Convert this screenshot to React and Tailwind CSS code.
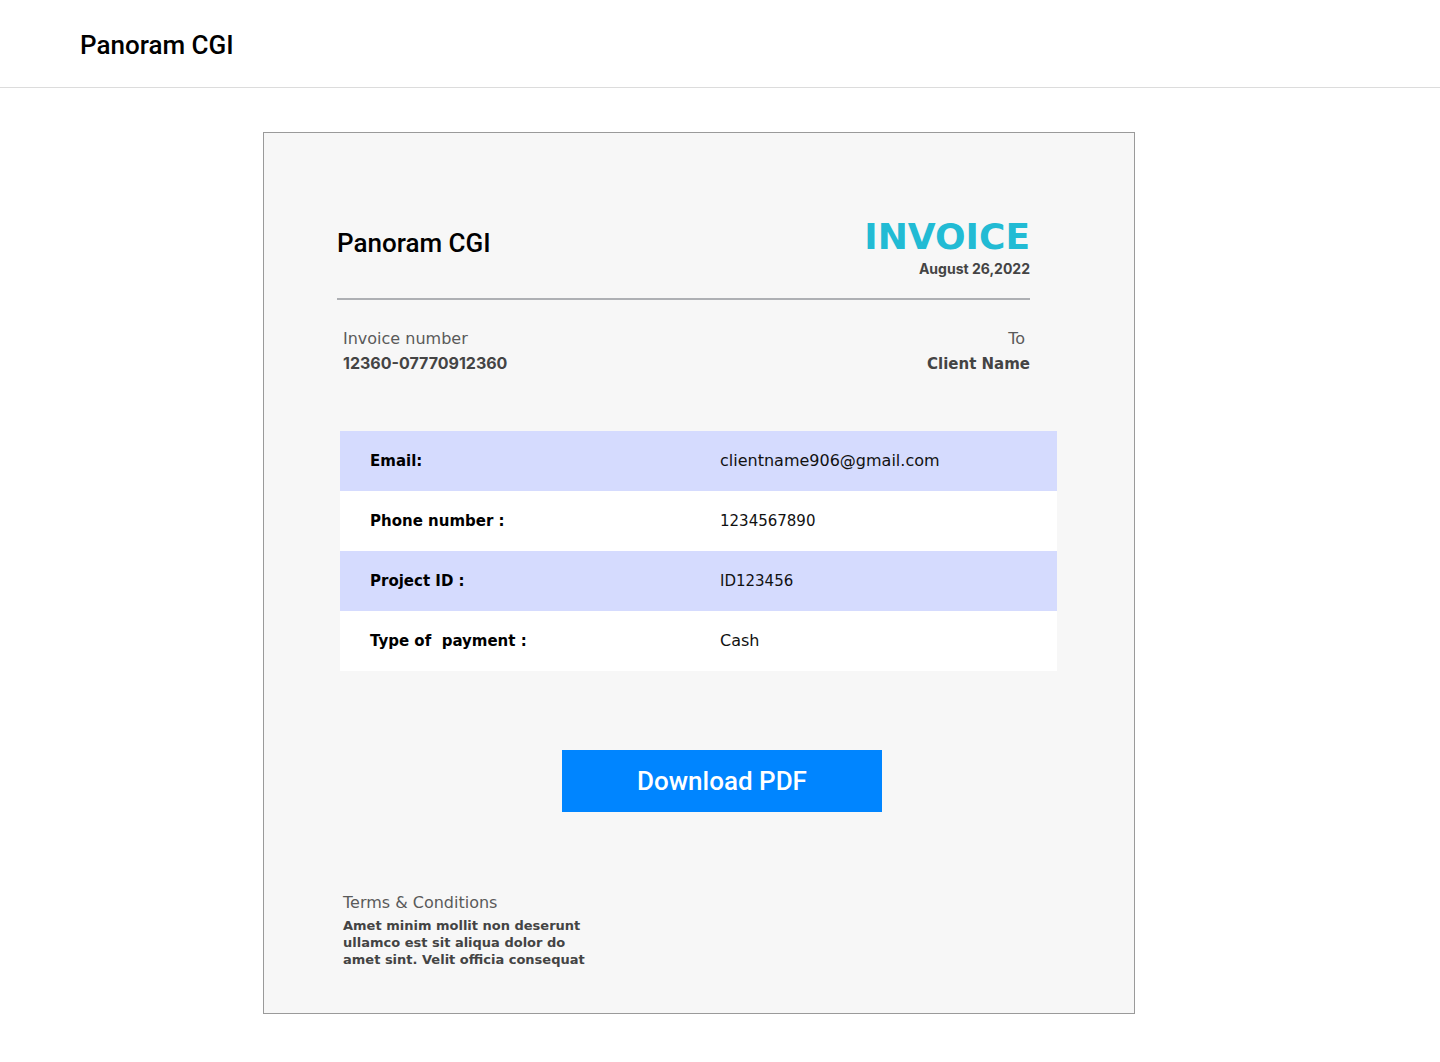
export default function App() {
  const rows = [
    { label: "Email:", value: "clientname906@gmail.com", shade: true, size: "text-[16px]" },
    { label: "Phone number :", value: "1234567890", shade: false, size: "text-[15px]" },
    { label: "Project ID :", value: "ID123456", shade: true, size: "text-[15px]" },
    { label: "Type of\u00a0 payment :", value: "Cash", shade: false, size: "text-[16px]" },
  ];

  return (
    <div className="min-h-screen bg-white">
      <header className="h-[88px] border-b border-[#dcdcdc] flex items-center px-20">
        <h1 className="text-[26px] font-medium text-black font-['Roboto',sans-serif] mt-[4px]">Panoram CGI</h1>
      </header>

      <main className="flex justify-center pt-[44px] pr-[42px]">
        <div className="w-[872px] h-[882px] border border-[#9a9a9a] bg-[#f7f7f7] px-[73px] pt-[84px] font-['DejaVu_Sans',sans-serif]">
          <div className="w-[693px]">
            <div className="flex justify-between items-start border-b-2 border-[#aeb0b4] pb-[19px]">
              <div className="pt-[7px] text-[26px] font-medium text-black font-['Roboto',sans-serif]">Panoram CGI</div>
              <div className="flex flex-col items-end">
                <div className="text-[36px] leading-[40px] font-bold text-[#22bbd4]">INVOICE</div>
                <div className="text-[14px] leading-[20px] mt-[2px] font-bold text-[#444] font-['Inter',sans-serif]">August 26,2022</div>
              </div>
            </div>

            <div className="flex justify-between pt-[27px] pl-[6px]">
              <div>
                <div className="text-[16px] font-normal text-[#5a5a5a] leading-[24px]">Invoice number</div>
                <div className="text-[16px] font-bold text-[#444] leading-[24px] font-['Inter',sans-serif]">12360-07770912360</div>
              </div>
              <div className="flex flex-col items-end">
                <div className="text-[16px] font-normal text-[#5a5a5a] leading-[24px] pr-[5px]">To</div>
                <div className="text-[15px] font-bold text-[#444] leading-[26px]">Client Name</div>
              </div>
            </div>
          </div>

          <div className="mt-[54px] ml-[3px] w-[717px]">
            {rows.map((r) => (
              <div
                key={r.label}
                className={`h-[60px] flex items-center ${r.shade ? "bg-[#d5dbfe]" : "bg-white"}`}
              >
                <div className="w-[380px] pl-[30px] text-[15px] font-bold text-black">{r.label}</div>
                <div className={`${r.size} text-[#111]`}>{r.value}</div>
              </div>
            ))}
          </div>

          <div className="flex justify-center mt-[79px] pl-[46px]">
            <button className="w-[320px] h-[62px] bg-[#0085ff] text-white text-[26px] font-medium font-['Roboto',sans-serif]">
              Download PDF
            </button>
          </div>

          <div className="mt-[80px] pl-[6px]">
            <div className="text-[16px] font-normal text-[#5a5a5a] leading-[22px]">Terms &amp; Conditions</div>
            <p className="w-[250px] mt-[3px] text-[13px] font-bold text-[#444] leading-[17px]">
              Amet minim mollit non deserunt ullamco est sit aliqua dolor do amet sint. Velit officia consequat
            </p>
          </div>
        </div>
      </main>
    </div>
  );
}
